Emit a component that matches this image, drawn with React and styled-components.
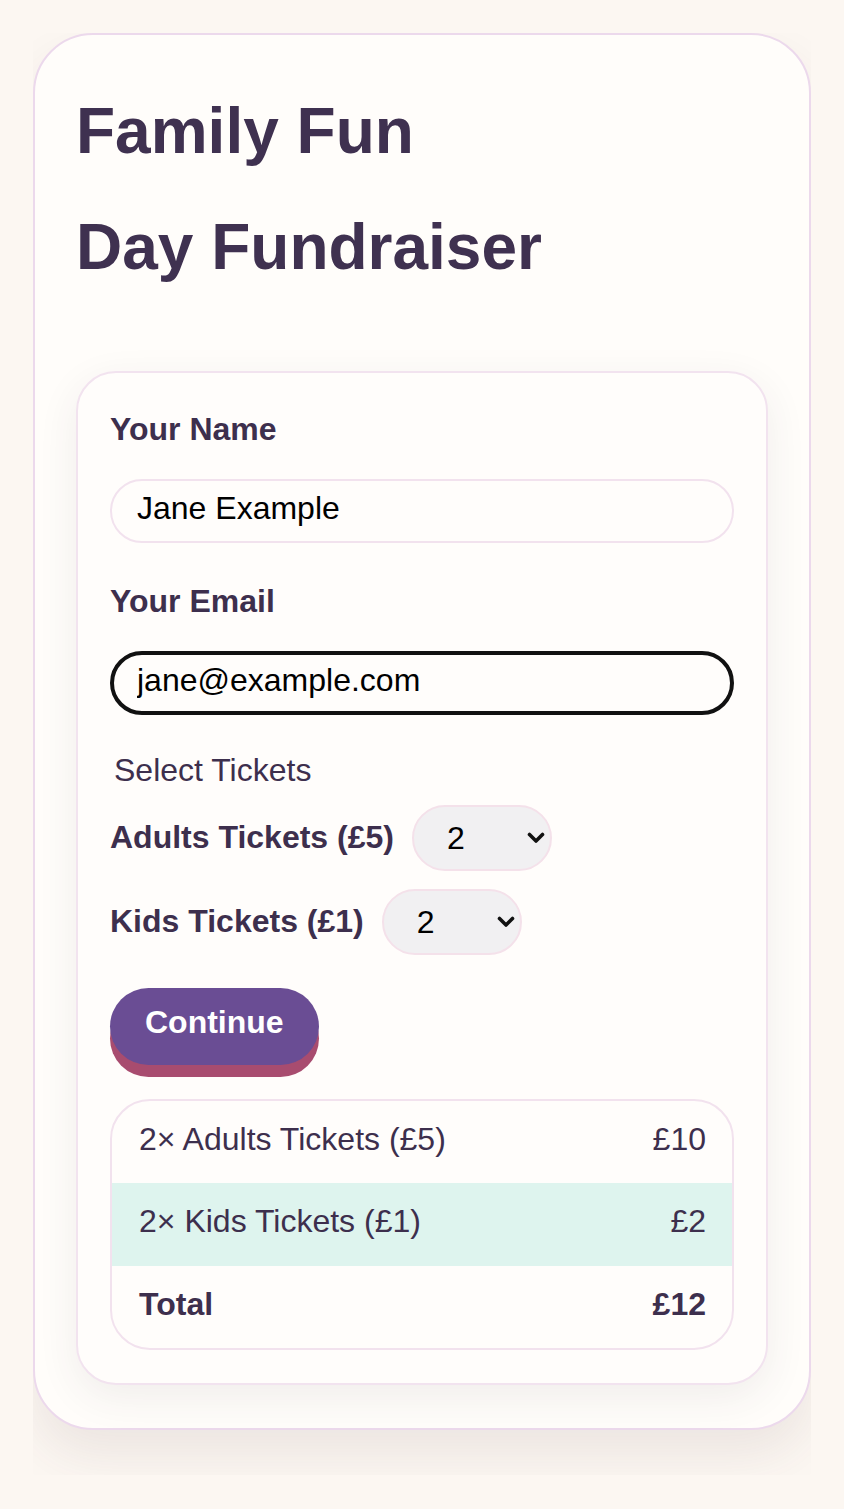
import React, { useState } from "react";
import styled, { createGlobalStyle } from "styled-components";

const GlobalStyle = createGlobalStyle`
  * {
    box-sizing: border-box;
  }
  body {
    margin: 0;
    background: #fcf7f2;
    font-family: "Liberation Sans", Arial, sans-serif;
    line-height: 1.8;
    color: #3d2f4d;
  }
`;

const prices = { adult: 5, kid: 1 };

const App = () => {
  const [name, setName] = useState("Jane Example");
  const [email, setEmail] = useState("jane@example.com");
  const [adults, setAdults] = useState(2);
  const [kids, setKids] = useState(2);

  const total = adults * prices.adult + kids * prices.kid;

  return (
    <>
      <GlobalStyle />
      <Page>
        <Card>
          <Title>
            <TitleLine>Family Fun</TitleLine>
            <TitleLine>Day Fundraiser</TitleLine>
          </Title>
          <FormCard>
            <Label htmlFor="name">Your Name</Label>
            <Input
              id="name"
              value={name}
              onChange={(e) => setName(e.target.value)}
            />
            <Label htmlFor="email">Your Email</Label>
            <Input
              id="email"
              $focused
              value={email}
              onChange={(e) => setEmail(e.target.value)}
            />
            <Fieldset>
              <Legend>Select Tickets</Legend>
              <TicketRow>
                <TicketLabel htmlFor="adults">Adults Tickets (£5)</TicketLabel>
                <SelectWrap>
                  <Select
                    id="adults"
                    value={adults}
                    onChange={(e) => setAdults(Number(e.target.value))}
                  >
                    {[0, 1, 2, 3, 4, 5].map((n) => (
                      <option key={n} value={n}>
                        {n}
                      </option>
                    ))}
                  </Select>
                  <Chevron />
                </SelectWrap>
              </TicketRow>
              <TicketRow>
                <TicketLabel htmlFor="kids">Kids Tickets (£1)</TicketLabel>
                <SelectWrap>
                  <Select
                    id="kids"
                    value={kids}
                    onChange={(e) => setKids(Number(e.target.value))}
                  >
                    {[0, 1, 2, 3, 4, 5].map((n) => (
                      <option key={n} value={n}>
                        {n}
                      </option>
                    ))}
                  </Select>
                  <Chevron />
                </SelectWrap>
              </TicketRow>
            </Fieldset>
            <ContinueBtn type="button">Continue</ContinueBtn>
            <Summary>
              <SummaryRow>
                <span>{adults}× Adults Tickets (£5)</span>
                <span>£{adults * prices.adult}</span>
              </SummaryRow>
              <SummaryRow $tint>
                <span>{kids}× Kids Tickets (£1)</span>
                <span>£{kids * prices.kid}</span>
              </SummaryRow>
              <SummaryRow $bold>
                <span>Total</span>
                <span>£{total}</span>
              </SummaryRow>
            </Summary>
          </FormCard>
        </Card>
      </Page>
    </>
  );
};

const Chevron = () => (
  <ChevronSvg viewBox="0 0 18 12" width="18" height="12">
    <path
      d="M2.5 2.5 L9 9 L15.5 2.5"
      fill="none"
      stroke="#111"
      strokeWidth="3.6"
      strokeLinecap="round"
      strokeLinejoin="round"
    />
  </ChevronSvg>
);

export default App;

const Page = styled.div`
  margin: 33px 33px 0;
  padding-bottom: 45px;
  overflow: hidden;
`;

const Card = styled.main`
  background: #fffdfa;
  border: 2px solid #ecd9ec;
  border-radius: 60px;
  padding: 38px 41px 43px;
  box-shadow: 0 26px 50px rgba(80, 60, 70, 0.09);
`;

const Title = styled.h1`
  margin: 0 0 66px;
  font-size: 64px;
  line-height: 116px;
  font-weight: 700;
  color: #3f3150;
`;

const TitleLine = styled.span`
  display: block;
`;

const FormCard = styled.section`
  display: flex;
  flex-direction: column;
  align-items: flex-start;
  background: #fffdfb;
  border: 2px solid #f2e3ef;
  border-radius: 40px;
  padding: 28px 32px 33px;
  box-shadow: 0 12px 40px rgba(70, 50, 70, 0.08);
`;

const Label = styled.label`
  font-size: 32px;
  line-height: 56px;
  font-weight: 700;
  color: #3d2f4d;
`;

const Input = styled.input`
  width: 100%;
  height: 64px;
  margin: 22px 0 30px;
  padding: 0 ${(p) => (p.$focused ? 23 : 25)}px 6px;
  font-family: "Liberation Sans", Arial, sans-serif;
  font-size: 32px;
  color: #000;
  background: #fffdfb;
  border: ${(p) => (p.$focused ? "4px solid #111" : "2px solid #f2e2ee")};
  border-radius: 32px;
  outline: none;
`;

const Fieldset = styled.fieldset`
  width: 100%;
  margin: -3px 0 0;
  padding: 0;
  border: 0;
  display: flex;
  flex-direction: column;
  gap: 18px;
`;

const Legend = styled.legend`
  padding: 0 4px;
  margin-bottom: 5px;
  font-size: 32px;
  line-height: 57.6px;
  color: #3d2f4d;
`;

const TicketRow = styled.div`
  display: flex;
  align-items: center;
  gap: 18px;
`;

const TicketLabel = styled.label`
  font-size: 32px;
  font-weight: 700;
  color: #3d2f4d;
`;

const SelectWrap = styled.div`
  position: relative;
  display: flex;
`;

const Select = styled.select`
  appearance: none;
  width: 140px;
  height: 66px;
  padding: 0 0 0 33px;
  font-family: "Liberation Sans", Arial, sans-serif;
  font-size: 32px;
  color: #000;
  background: #f1f0f2;
  border: 2px solid #f4e1ea;
  border-radius: 33px;
  outline: none;
`;

const ChevronSvg = styled.svg`
  position: absolute;
  right: 7px;
  top: 27px;
  pointer-events: none;
`;

const ContinueBtn = styled.button`
  margin-top: 33px;
  height: 77px;
  padding: 0 35px 8px;
  font-family: "Liberation Sans", Arial, sans-serif;
  font-size: 32px;
  font-weight: 700;
  color: #ffffff;
  background: #6a4d94;
  border: 0;
  border-radius: 39px;
  box-shadow: 0 12px 0 #a84c6f;
  cursor: pointer;
`;

const Summary = styled.div`
  width: 100%;
  margin-top: 34px;
  border: 2px solid #f2e2ee;
  border-radius: 40px;
  overflow: hidden;
  background: #fffdfb;
`;

const SummaryRow = styled.div`
  display: flex;
  justify-content: space-between;
  padding: 10px 26px 15px 27px;
  font-size: 32px;
  line-height: 57.6px;
  font-weight: ${(p) => (p.$bold ? 700 : 400)};
  color: #3d2f4d;
  background: ${(p) => (p.$tint ? "#def4ee" : "transparent")};
`;
